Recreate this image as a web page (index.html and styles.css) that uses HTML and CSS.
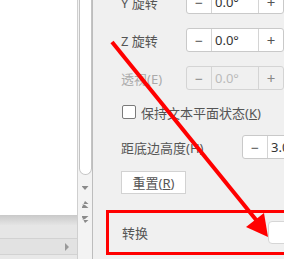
FILE: index.html
```html
<!DOCTYPE html>
<html lang="zh-CN">
	<head>
		<meta charset="utf-8">
		<link rel="stylesheet" href="styles.css">
	</head>
	<body>
		<div class="workspace">
			<section class="doc">
				<div class="page"></div>
				<div class="page-shadow"></div>
				<div class="page-gap"></div>
				<div class="hscroll"><span class="tri-right"></span></div>
			</section>

			<div class="vscroll">
				<div class="thumb"></div>
				<span class="arrow down"></span>
				<span class="arrow dbl-up"></span>
				<span class="arrow dbl-down"></span>
			</div>

			<section class="panel">
				<div class="row first">
					<label class="label">Y 旋转</label>
					<div class="spin"><span class="minus">−</span><span class="value">0.0°</span><span class="plus">+</span></div>
				</div>
				<div class="row">
					<label class="label">Z 旋转</label>
					<div class="spin"><span class="minus">−</span><span class="value">0.0°</span><span class="plus">+</span></div>
				</div>
				<div class="row disabled">
					<label class="label">透视(E)</label>
					<div class="spin"><span class="minus">−</span><span class="value">0.0°</span><span class="plus">+</span></div>
				</div>
				<div class="check-row">
					<span class="checkbox"></span>
					<span>保持文本平面状态(<u>K</u>)</span>
				</div>
				<div class="row">
					<label class="label wide">距底边高度(H)</label>
					<div class="spin"><span class="minus">−</span><span class="value">3.0</span><span class="plus">+</span></div>
				</div>
				<button class="reset">重置(<u>R</u>)</button>

				<div class="convert">
					<span class="convert-label">转换</span>
					<span class="convert-input"></span>
				</div>
			</section>
		</div>

		<svg class="annotation" width="284" height="259" viewBox="0 0 284 259">
			<line x1="112" y1="42" x2="257" y2="221" stroke="#ff0000" stroke-width="4"/>
			<polygon points="268,237 264,213 246,227" fill="#ff0000"/>
		</svg>
	</body>
</html>
```

FILE: styles.css
```css
body {
	margin: 0;
	width: 284px;
	height: 259px;
	overflow: hidden;
	position: relative;
	font: 13px "Noto Sans", "Noto Sans CJK SC", sans-serif;
	color: #555;
	background: #f0f0f0;
}

.workspace { display: flex; height: 259px; }

/* left document area */
.doc { width: 77px; flex: none; display: flex; flex-direction: column; background: #e8e8e8; }
.page { height: 215px; background: #fff; }
.page-shadow { height: 10px; background: linear-gradient(#c9c9c9, #e4e4e4); }
.page-gap { height: 13px; background: #e6e6e6; }
.hscroll {
	height: 15px;
	background: #e2e2e2;
	border-top: 1px solid #d2d2d2;
	border-bottom: 1px solid #d2d2d2;
	display: flex;
	justify-content: flex-end;
	align-items: center;
	padding-right: 8px;
}
.tri-right { border-left: 4px solid #999; border-top: 4px solid transparent; border-bottom: 4px solid transparent; }

/* vertical scrollbar */
.vscroll {
	width: 14px;
	flex: none;
	border-left: 1px solid #cfcfcf;
	border-right: 1px solid #bdbdbd;
	background: #f3f3f3;
	display: flex;
	flex-direction: column;
	align-items: center;
}
.thumb {
	width: 13px;
	height: 175px;
	flex: none;
	background: #fff;
	border: 1px solid #c4c4c4;
	border-top: 0;
	border-radius: 0 0 7px 7px;
	box-sizing: border-box;
}
.arrow { display: block; width: 7px; flex: none; }
.arrow.down { height: 4px; margin-top: 11px; background: #8a8a8a; clip-path: polygon(0 0, 100% 0, 50% 100%); }
.arrow.dbl-up { height: 7px; margin-top: 11px; background: #8a8a8a; clip-path: polygon(50% 0, 100% 43%, 0 43%, 50% 57%, 100% 100%, 0 100%); }
.arrow.dbl-down { height: 7px; margin-top: 8px; background: #8a8a8a; clip-path: polygon(0 0, 100% 0, 50% 43%, 0 57%, 100% 57%, 50% 100%); }

/* right properties panel */
.panel { flex: 1; padding-left: 28px; min-width: 0; }

.row { display: flex; align-items: center; height: 24px; margin-bottom: 14px; }
.row.first { margin-top: -10px; }
.label { width: 65px; flex: none; }
.label.wide { width: 121px; }

.spin {
	flex: none;
	display: flex;
	height: 24px;
	box-sizing: border-box;
	border: 1px solid #c9c9c9;
	border-radius: 3px;
	background: #fff;
	color: #333;
}
.spin span { display: flex; align-items: center; }
.minus { width: 24px; justify-content: center; border-right: 1px solid #d4d4d4; font-size: 14px; color: #555; }
.value { width: 46px; padding-left: 3px; box-sizing: border-box; }
.plus { width: 24px; justify-content: center; border-left: 1px solid #d4d4d4; font-size: 15px; color: #555; }

.disabled .label { color: #aaa; }
.disabled .spin { background: #f0f0f0; border-color: #d4d4d4; }
.disabled .value { color: #bbb; }
.disabled .minus, .disabled .plus { color: #888; }

.check-row { display: flex; align-items: center; gap: 5px; height: 16px; margin: 2px 0 15px 1px; }
.checkbox { width: 12px; height: 12px; border: 1px solid #7a7a7a; border-radius: 2px; background: #fff; }

.reset {
	display: block;
	width: 65px;
	height: 23px;
	margin: -2px 0 0 0;
	padding: 0;
	font: inherit;
	color: #555;
	background: #fff;
	border: 1px solid #d2d2d2;
}

.convert {
	display: flex;
	align-items: center;
	gap: 120px;
	width: 220px;
	height: 39px;
	margin: 16px 0 0 -15px;
	padding-left: 13px;
	border: 3px solid #ff0000;
	border-right: 0;
}
.convert-label { flex: none; }
.convert-input {
	flex: none;
	width: 40px;
	height: 21px;
	background: #fff;
	border: 1px solid #d6d6d6;
	border-radius: 4px;
}

.annotation { position: absolute; left: 0; top: 0; pointer-events: none; }
```
